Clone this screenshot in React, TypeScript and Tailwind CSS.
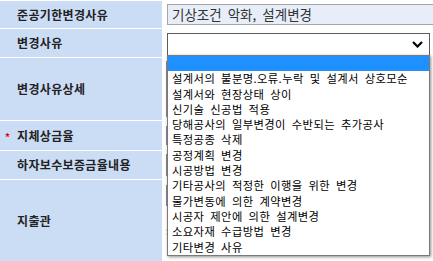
import React from "react";

const options = [
  "",
  "설계서의 불분명.오류.누락 및 설계서 상호모순",
  "설계서와 현장상태 상이",
  "신기술 신공법 적용",
  "당해공사의 일부변경이 수반되는 추가공사",
  "특정공종 삭제",
  "공정계획 변경",
  "시공방법 변경",
  "기타공사의 적정한 이행을 위한 변경",
  "물가변동에 의한 계약변경",
  "시공자 제안에 의한 설계변경",
  "소요자재 수급방법 변경",
  "기타변경 사유",
];

function Label({ children, required }: { children: React.ReactNode; required?: boolean }) {
  return (
    <div className="relative flex w-[162px] shrink-0 items-center bg-[#cbdcf5] pl-[17px] text-[12px] font-bold tracking-[0.35px] text-[#222]">
      {required && <span className="absolute left-[5px] top-1/2 -translate-y-1/2 text-[10px] text-[#e00]">*</span>}
      {children}
    </div>
  );
}

export default function App() {
  return (
    <div
      className="relative h-[261px] w-[433px] overflow-hidden bg-white pt-px"
      style={{ fontFamily: '"Noto Sans CJK KR", "Noto Sans", sans-serif' }}
    >
      <div className="flex flex-col gap-px">
        <div className="flex h-[27px]">
          <Label>준공기한변경사유</Label>
          <div className="flex flex-1 items-center pl-[5px]">
            <div className="flex h-[21px] w-[300px] shrink-0 items-center border border-[#a5a5a5] bg-[#e8eef9] pl-[4px] text-[13.5px] text-[#333] [word-spacing:3px]">
              기상조건 악화, 설계변경
            </div>
          </div>
        </div>

        <div className="flex h-[28px]">
          <Label>변경사유</Label>
          <div className="flex flex-1 items-start pl-[5px] pt-[4px]">
            <div className="flex h-[23px] w-[263px] items-center justify-end border border-[#5c5c5c] bg-white pr-[6px]">
              <svg width="11" height="7" viewBox="0 0 11 7">
                <polyline points="1,1 5.5,5.5 10,1" fill="none" stroke="#000" strokeWidth="2.2" />
              </svg>
            </div>
          </div>
        </div>

        <div className="flex h-[62px]">
          <Label>변경사유상세</Label>
          <div className="flex flex-1 items-center pl-[4px]">
            <div className="h-[56px] w-[263px] border border-[#8a8a8a] bg-white" />
          </div>
        </div>

        <div className="flex h-[29px]">
          <Label required>지체상금율</Label>
          <div className="flex flex-1 items-center pl-[4px]">
            <div className="h-[19px] w-[120px] border border-[#8a8a8a] bg-white" />
          </div>
        </div>

        <div className="flex h-[28px]">
          <Label>하자보수보증금율내용</Label>
          <div className="flex flex-1 items-center pl-[4px]">
            <div className="h-[22px] w-[200px] border border-[#8a8a8a] bg-white" />
          </div>
        </div>

        <div className="flex h-[81px]">
          <Label>지출관</Label>
          <div className="flex flex-1 flex-col gap-[20px] pl-[4px] pt-[5px]">
            <div className="h-[21px] w-[200px] border border-[#8a8a8a] bg-white" />
            <div className="text-[10px] leading-none text-[#e00]">:</div>
          </div>
        </div>
      </div>

      <div className="absolute left-[167px] top-[55px] h-[201px] w-[263px] border border-[#7a7a7a] bg-white shadow-[1px_1px_3px_rgba(0,0,0,0.45)]">
        {options.map((o, i) => (
          <div
            key={i}
            className={`h-[15.3px] overflow-hidden whitespace-nowrap pl-[4px] text-[11.3px] leading-[15px] tracking-[0.4px] [word-spacing:3px] ${
              i === 0 ? "bg-[#1e90ff] text-white" : "text-black"
            }`}
          >
            {o}
          </div>
        ))}
      </div>
    </div>
  );
}
